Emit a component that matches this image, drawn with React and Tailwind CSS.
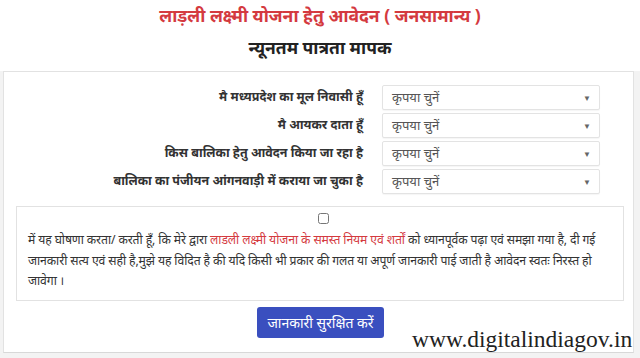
import { useState } from 'react'

const questions = [
  'मै मध्यप्रदेश का मूल निवासी हूँ',
  'मै आयकर दाता हूँ',
  'किस बालिका हेतु आवेदन किया जा रहा है',
  'बालिका का पंजीयन आंगनवाड़ी में कराया जा चुका है',
]

const SelectBox = () => (
  <div className="w-[218px] h-[25px] border border-[#e3e3e3] rounded-[2px] bg-white flex items-center justify-between pl-[9px] pr-[8px] shadow-[0_1px_1px_rgba(0,0,0,0.04)]">
    <span className="text-[13px] text-[#555]">कृपया चुनें</span>
    <span className="text-[8px] text-[#666]">▼</span>
  </div>
)

export default function App() {
  const [checked, setChecked] = useState(false)
  return (
    <div className="w-[640px] h-[358px] overflow-hidden bg-[#f3f3f3] font-['Noto_Sans',sans-serif]">
      <div className="bg-white h-[71px] flex flex-col items-center">
        <h1 className="text-[17.5px] font-bold text-[#d43a3f] mt-[1px] leading-[28px]">लाड़ली लक्ष्मी योजना हेतु आवेदन ( जनसामान्य )</h1>
        <h2 className="text-[17.5px] font-bold text-[#222] mt-[4px] leading-[28px]">न्यूनतम पात्रता मापक</h2>
      </div>
      <div className="ml-[3px] w-[631px] h-[282px] bg-white border border-[#e2e2e2] border-b-[#d8d8d8]">
        <div className="pt-[13px] flex flex-col gap-[3px]">
          {questions.map((q) => (
            <div key={q} className="flex items-center h-[25px]">
              <label className="w-[359px] text-right text-[12.5px] font-bold text-[#333]">{q}</label>
              <div className="ml-[19px]">
                <SelectBox />
              </div>
            </div>
          ))}
        </div>
        <div className="ml-[12px] mt-[12px] w-[608px] h-[95px] border border-[#e2e2e2] pl-[11px] pr-[4px] pt-[2px]">
          <div className="flex justify-center pt-[4px]">
            <input type="checkbox" checked={checked} onChange={(e) => setChecked(e.target.checked)} className="w-[11px] h-[11px] m-0" />
          </div>
          <p className="text-[12.2px] text-[#333] leading-[20.5px] mt-[6px] tracking-[-0.1px]">
            में यह घोषणा करता/ करती हूँ, कि मेरे द्वारा <span className="text-[#d43a3f]">लाडली लक्ष्मी योजना के समस्त नियम एवं शर्तों</span> को ध्यानपूर्वक पढ़ा एवं समझा गया है, दी गई जानकारी सत्य एवं सही है,मुझे यह विदित है की यदि किसी भी प्रकार की गलत या अपूर्ण जानकारी पाई जाती है आवेदन स्वतः निरस्त हो जावेगा ।
          </p>
        </div>
        <div className="flex items-start mt-[6px]">
          <button className="ml-[253px] w-[127px] h-[31px] bg-[#3a4fbf] rounded-[3px] text-white text-[14px]">जानकारी सुरक्षित करें</button>
          <span className="ml-[28px] mt-[20px] text-[23.5px] leading-[24px] text-[#222] font-['Liberation_Serif',serif]">www.digitalindiagov.in</span>
        </div>
      </div>
    </div>
  )
}
